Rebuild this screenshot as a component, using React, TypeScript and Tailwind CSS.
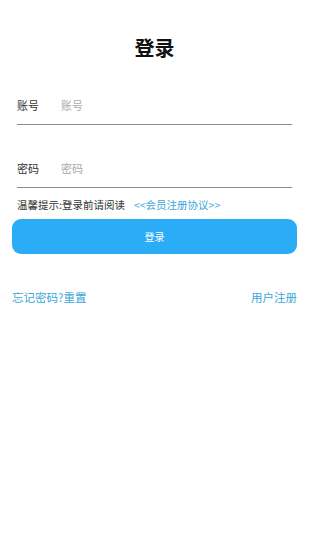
export default function App() {
  const font = {
    fontFamily: '"Noto Sans CJK SC", "Noto Sans", sans-serif',
  };

  return (
    <div
      className="w-[309px] h-[550px] bg-white flex flex-col"
      style={font}
    >
      {/* Title */}
      <h1 className="pt-[36px] text-center text-[20px] leading-[24px] font-bold text-[#111]">
        登录
      </h1>

      {/* Account */}
      <div className="mt-[33px] mx-[17px] w-[275px] h-[32px] pb-[6px] flex items-center border-b border-[#8a8a8a] text-[11px]">
        <span className="w-[44px] text-[#333]">账号</span>
        <span className="text-[#aaa]">账号</span>
      </div>

      {/* Password */}
      <div className="mt-[31px] mx-[17px] w-[275px] h-[32px] pb-[6px] flex items-center border-b border-[#8a8a8a] text-[11px]">
        <span className="w-[44px] text-[#333]">密码</span>
        <span className="text-[#aaa]">密码</span>
      </div>

      {/* Hint */}
      <div className="mt-[10px] ml-[17px] flex items-center text-[10.5px] leading-[14px]">
        <span className="text-[#333]">温馨提示:登录前请阅读</span>
        <span className="ml-[9px] text-[#3aa7d8]">&lt;&lt;会员注册协议&gt;&gt;</span>
      </div>

      {/* Button */}
      <button className="mt-[7px] mx-[12px] h-[35px] rounded-[9px] bg-[#2aacf7] text-white text-[10px]">
        登录
      </button>

      {/* Bottom links */}
      <div className="mt-[35px] mx-[12px] flex justify-between text-[11.5px] text-[#3aa7d8]">
        <span>忘记密码?重置</span>
        <span>用户注册</span>
      </div>
    </div>
  );
}
